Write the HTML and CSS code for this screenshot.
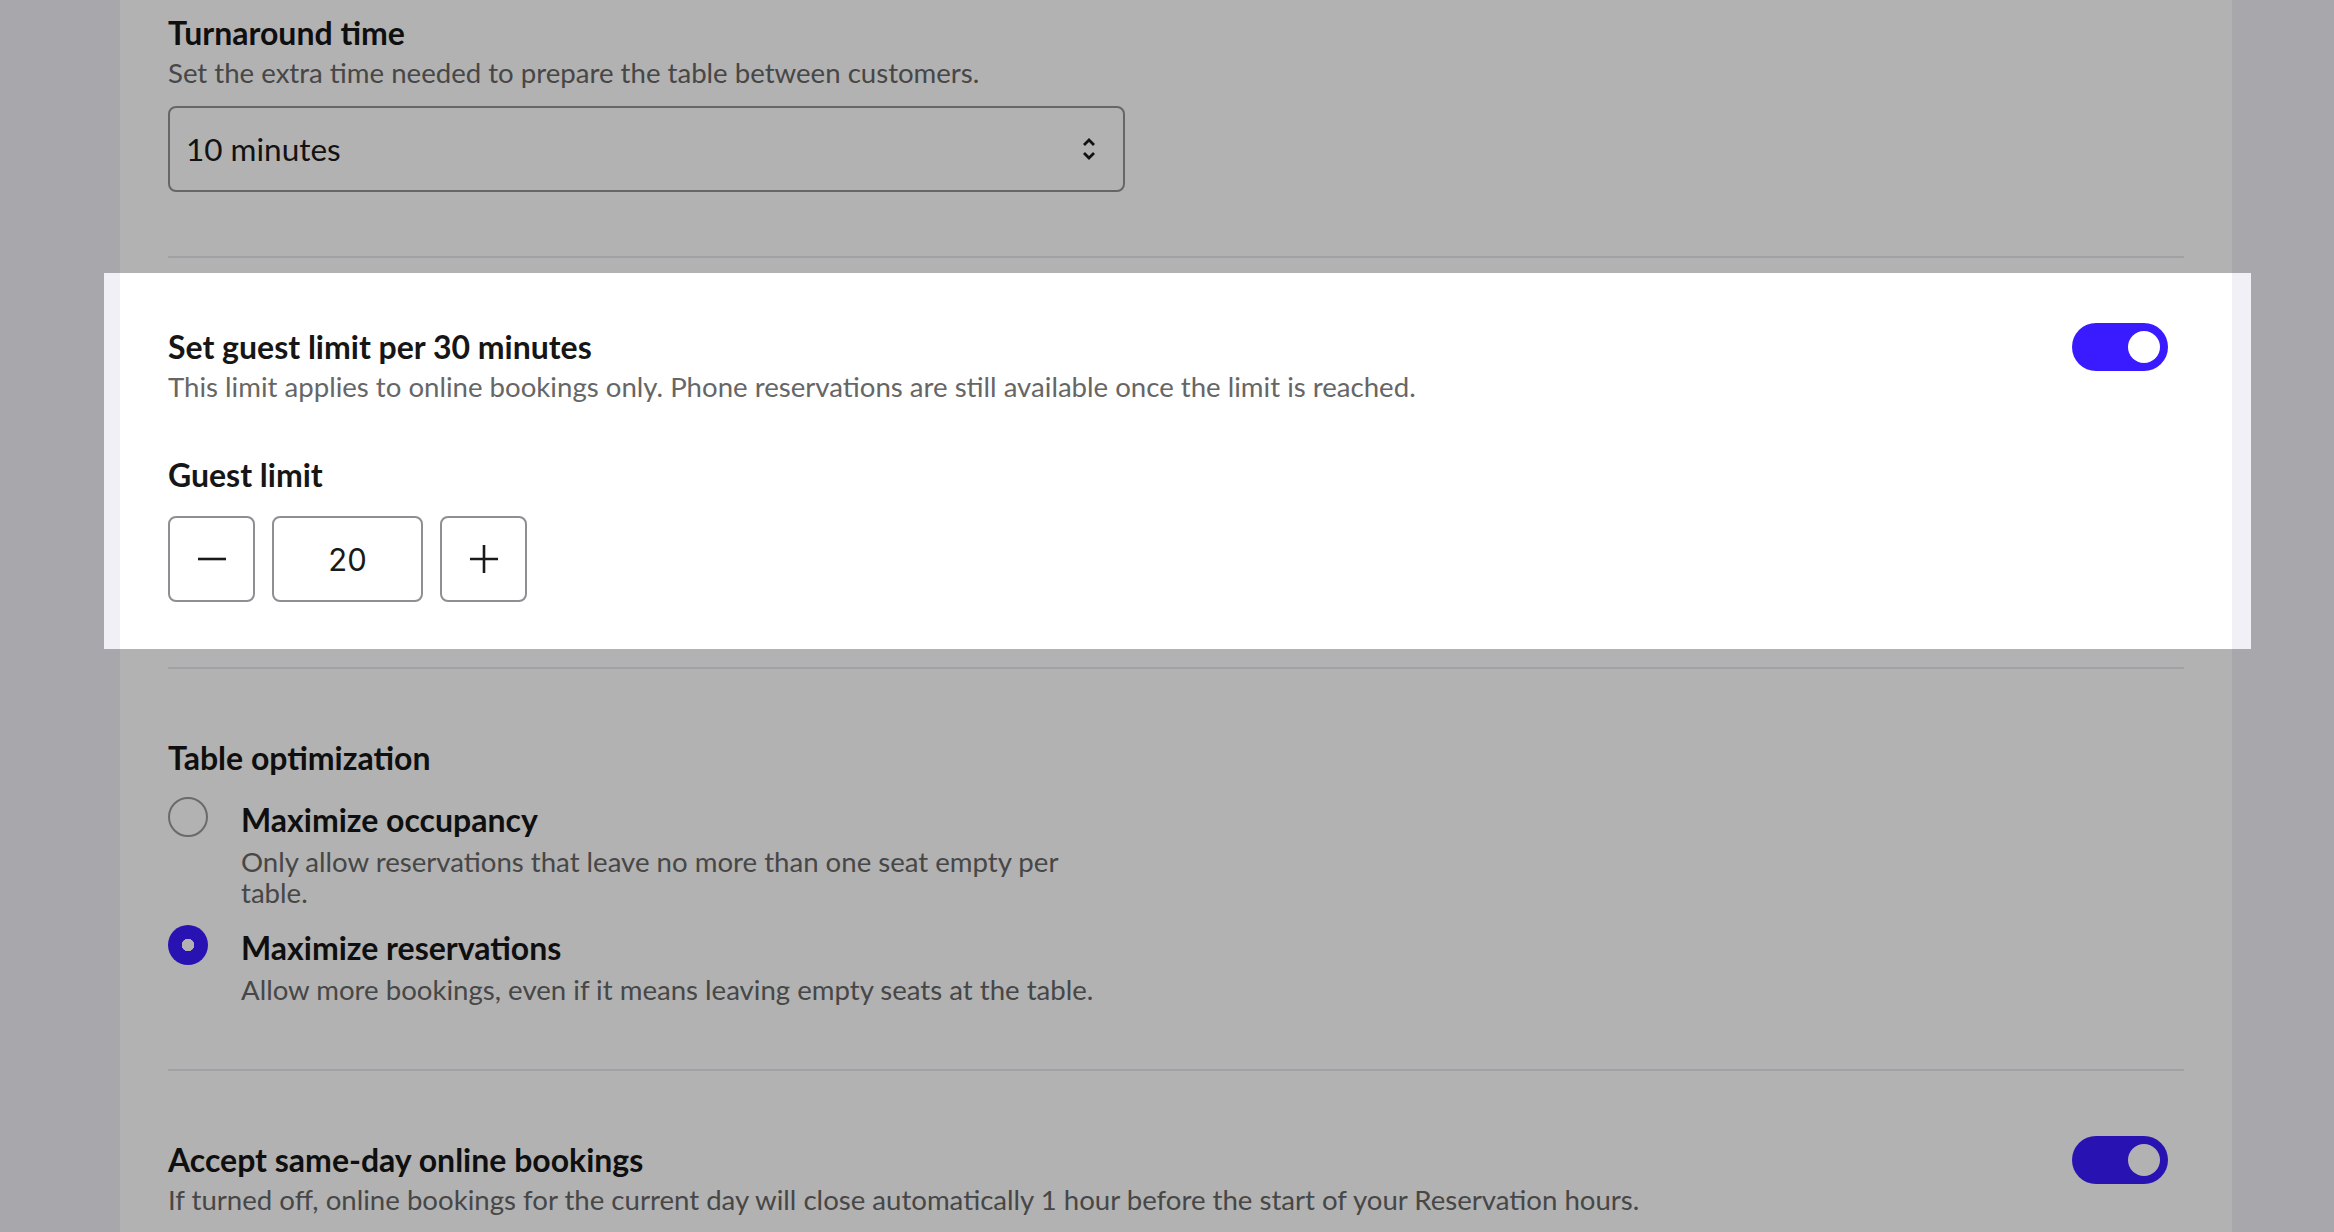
FILE: index.html
```html
<!DOCTYPE html>
<html lang="en">
<head>
    <meta charset="UTF-8">
    <title>Reservation settings</title>
    <link rel="stylesheet" href="styles.css">
</head>
<body>
    <div class="panel">

        <div class="section first">
            <div class="title">Turnaround time</div>
            <div class="desc">Set the extra time needed to prepare the table between customers.</div>
            <div class="select">
                <span>10 minutes</span>
                <svg class="chevrons" width="16" height="28" viewBox="0 0 16 28">
                    <path d="M3 10 L8 5 L13 10" fill="none" stroke="#1a1a1a" stroke-width="2.8"/>
                    <path d="M3 18 L8 23 L13 18" fill="none" stroke="#1a1a1a" stroke-width="2.8"/>
                </svg>
            </div>
        </div>

        <div class="section focus">
            <div class="row">
                <div>
                    <div class="title">Set guest limit per 30 minutes</div>
                    <div class="desc">This limit applies to online bookings only. Phone reservations are still available once the limit is reached.</div>
                </div>
                <div class="toggle on"><span class="knob"></span></div>
            </div>
            <div class="title label">Guest limit</div>
            <div class="stepper">
                <button class="step">
                    <svg width="30" height="30" viewBox="0 0 30 30"><path d="M1 15 H29" stroke="#1a1a1a" stroke-width="2.6"/></svg>
                </button>
                <div class="count">20</div>
                <button class="step">
                    <svg width="30" height="30" viewBox="0 0 30 30"><path d="M1 15 H29 M15 1 V29" stroke="#1a1a1a" stroke-width="2.6"/></svg>
                </button>
            </div>
        </div>

        <div class="section radios">
            <div class="title">Table optimization</div>
            <div class="option">
                <span class="radio"></span>
                <div class="option-text">
                    <div class="option-name">Maximize occupancy</div>
                    <div class="desc">Only allow reservations that leave no more than one seat empty per table.</div>
                </div>
            </div>
            <div class="option">
                <span class="radio checked"></span>
                <div class="option-text">
                    <div class="option-name">Maximize reservations</div>
                    <div class="desc">Allow more bookings, even if it means leaving empty seats at the table.</div>
                </div>
            </div>
        </div>

        <div class="section">
            <div class="row">
                <div>
                    <div class="title">Accept same-day online bookings</div>
                    <div class="desc">If turned off, online bookings for the current day will close automatically 1 hour before the start of your Reservation hours.</div>
                </div>
                <div class="toggle on"><span class="knob"></span></div>
            </div>
        </div>

    </div>
</body>
</html>
```

FILE: styles.css
```css
body{
    margin: 0;
    height: 1232px;
    overflow: hidden;
    background: #f0f0f6;
    font-family: Lato, "Noto Sans", sans-serif;
    color: #1a1a1a;
}

.panel{
    margin-left: 120px;
    width: 2112px;
    min-height: 1400px;
    box-sizing: border-box;
    padding: 15px 48px 0;
    background: #ffffff;
}

.section{
    padding: 71px 0 64px;
    border-bottom: 2px solid #e7e6ed;
}
.section.first{
    padding-top: 0;
}

.title{
    font-size: 32px;
    line-height: 36px;
    font-weight: 700;
    color: #161616;
}
.desc{
    margin-top: 4px;
    font-size: 27.6px;
    line-height: 36px;
    color: #666666;
}

/* select */
.select{
    display: flex;
    align-items: center;
    justify-content: space-between;
    width: 957px;
    height: 86px;
    box-sizing: border-box;
    margin-top: 15px;
    padding: 0 26px 0 16px;
    border: 2px solid #939393;
    border-radius: 8px;
    font-size: 31.5px;
}

.row{
    display: flex;
    justify-content: space-between;
    align-items: flex-start;
}

/* highlighted block, everything else gets dimmed */
.focus{
    position: relative;
    padding-bottom: 65px;
}
.focus::before{
    content: '';
    position: absolute;
    top: 15px;
    bottom: 18px;
    left: -64px;
    right: -67px;
    box-shadow: 0 0 0 4000px rgba(0, 0, 0, 0.3);
    pointer-events: none;
    z-index: 10;
}

.toggle{
    position: relative;
    flex-shrink: 0;
    width: 96px;
    height: 48px;
    margin: -6px 16px 0 0;
    border-radius: 24px;
    background: #c9c9cf;
}
.toggle.on{
    background: #3a1bff;
}
.knob{
    position: absolute;
    top: 8px;
    left: 8px;
    width: 32px;
    height: 32px;
    border-radius: 50%;
    background: #ffffff;
}
.toggle.on .knob{
    left: 56px;
}

.label{
    margin-top: 52px;
}

/* stepper */
.stepper{
    display: flex;
    gap: 17px;
    margin-top: 23px;
}
.step, .count{
    height: 86px;
    box-sizing: border-box;
    border: 2px solid #8e8e93;
    border-radius: 8px;
    background: #ffffff;
    display: flex;
    align-items: center;
    justify-content: center;
}
.step{
    width: 87px;
    padding: 0;
}
.count{
    width: 151px;
    font-family: Inter, "Liberation Sans", sans-serif;
    font-size: 31px;
}

/* radio list */
.radios{
    padding-bottom: 64px;
}
.option{
    display: flex;
    gap: 33px;
    margin-top: 17px;
}
.radios .title + .option{
    margin-top: 21px;
}
.radio{
    flex-shrink: 0;
    width: 40px;
    height: 40px;
    box-sizing: border-box;
    border: 2px solid #999999;
    border-radius: 50%;
}
.radio.checked{
    border: none;
    background: radial-gradient(circle, #ffffff 0 6px, #3a1bff 6.5px);
}
.option-text{
    width: 860px;
    padding-top: 3px;
}
.option-name{
    font-size: 32px;
    line-height: 40px;
    font-weight: 700;
    color: #161616;
}
.option-text .desc{
    margin-top: 6px;
    line-height: 31px;
}
```
